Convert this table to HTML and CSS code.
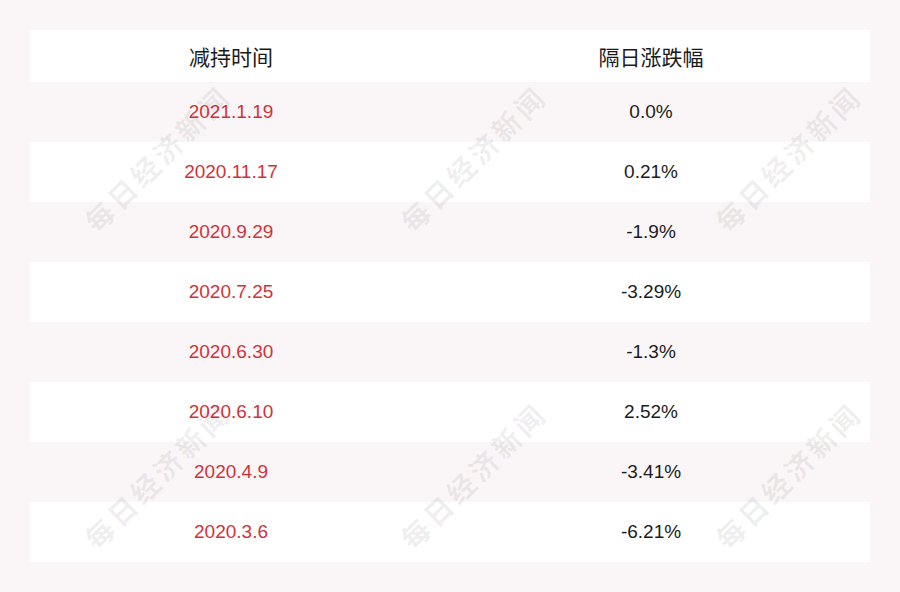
FILE: index.html
```html
<!DOCTYPE html>
<html lang="zh">
<head>
<meta charset="utf-8">
<link rel="stylesheet" href="styles.css">
</head>
<body>
<div class="page">
  <div class="table">
    <div class="row head"><div class="cell">减持时间</div><div class="cell">隔日涨跌幅</div></div>
    <div class="row alt"><div class="cell date">2021.1.19</div><div class="cell">0.0%</div></div>
    <div class="row"><div class="cell date">2020.11.17</div><div class="cell">0.21%</div></div>
    <div class="row alt"><div class="cell date">2020.9.29</div><div class="cell">-1.9%</div></div>
    <div class="row"><div class="cell date">2020.7.25</div><div class="cell">-3.29%</div></div>
    <div class="row alt"><div class="cell date">2020.6.30</div><div class="cell">-1.3%</div></div>
    <div class="row"><div class="cell date">2020.6.10</div><div class="cell">2.52%</div></div>
    <div class="row alt"><div class="cell date">2020.4.9</div><div class="cell">-3.41%</div></div>
    <div class="row"><div class="cell date">2020.3.6</div><div class="cell">-6.21%</div></div>
  </div>
  <div class="wm w1">每日经济新闻</div>
  <div class="wm w2">每日经济新闻</div>
  <div class="wm w3">每日经济新闻</div>
  <div class="wm w4">每日经济新闻</div>
  <div class="wm w5">每日经济新闻</div>
  <div class="wm w6">每日经济新闻</div>
</div>
</body>
</html>
```

FILE: styles.css
```css
html, body {
  margin: 0;
  padding: 0;
}
body {
  background: #faf6f7;
  font-family: "Liberation Sans", "Noto Sans CJK SC", sans-serif;
}
.page {
  position: relative;
  width: 900px;
  height: 592px;
  overflow: hidden;
  box-sizing: border-box;
  padding: 30px 30px;
}
.table {
  display: flex;
  flex-direction: column;
}
.row {
  display: grid;
  grid-template-columns: 1fr 1fr;
  height: 60px;
  background: #ffffff;
}
.row.alt {
  background: #faf6f7;
}
.row.head {
  height: 52px;
}
.cell {
  display: flex;
  align-items: center;
  justify-content: center;
  padding-right: 18px;
  font-size: 19px;
  color: #1c1c1c;
}
.head .cell {
  font-family: "Noto Sans CJK SC", sans-serif;
  font-size: 21px;
  color: #1a1a1a;
}
.cell.date {
  color: #cf333a;
}
.wm {
  position: absolute;
  width: 240px;
  margin-left: -120px;
  margin-top: -20px;
  height: 40px;
  line-height: 40px;
  text-align: center;
  font-family: "Noto Sans CJK SC", sans-serif;
  font-weight: 700;
  font-size: 28px;
  letter-spacing: 4px;
  color: rgba(0, 0, 0, 0.075);
  transform: rotate(-45deg);
  white-space: nowrap;
  pointer-events: none;
}
.w1 { left: 157px; top: 158px; }
.w2 { left: 473px; top: 158px; }
.w3 { left: 788px; top: 158px; }
.w4 { left: 157px; top: 475px; }
.w5 { left: 473px; top: 475px; }
.w6 { left: 788px; top: 475px; }
```
